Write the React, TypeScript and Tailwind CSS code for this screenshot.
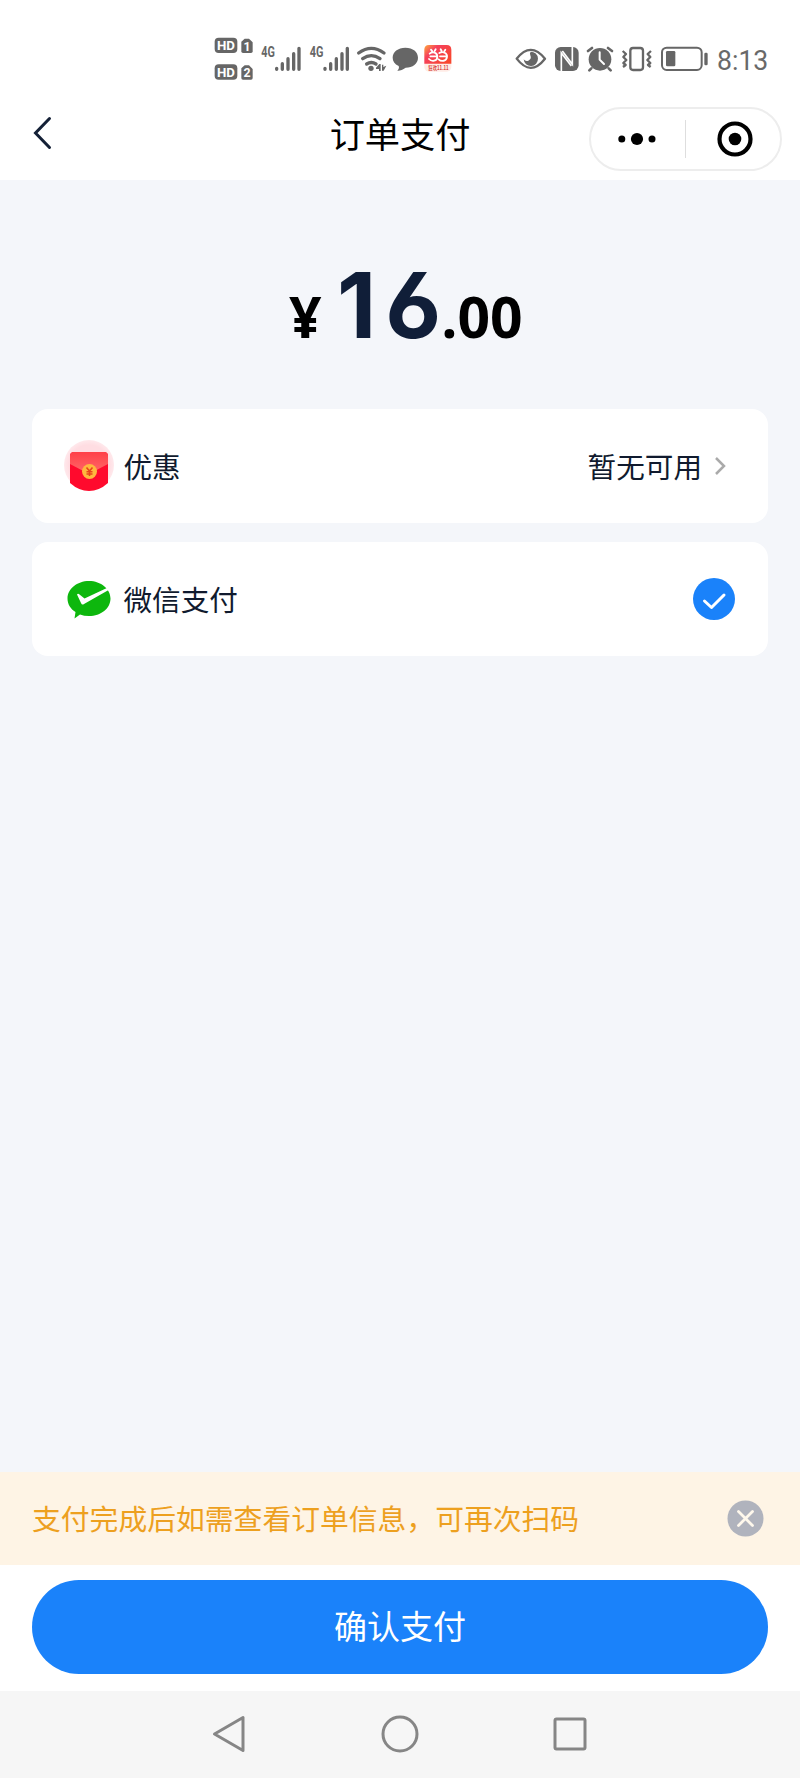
import type { ReactNode } from 'react';

const GRAY = '#666666';

/* Status icons share one 210-unit-high grid drawn at a third of its size. */
function StatusIcon({ x, w, children }: { x: number; w: number; children: ReactNode }) {
  return (
    <svg
      className="block shrink-0"
      width={w / 3}
      height={70}
      viewBox={`${x} 0 ${w} 210`}
      fill={GRAY}
      fontFamily="'Roboto', 'Liberation Sans', sans-serif"
    >
      {children}
    </svg>
  );
}

function SimRow({ y, n }: { y: number; n: string }) {
  return (
    <g>
      <rect x="44" y={y} width="68" height="46" rx="12" />
      <text x="78" y={y + 37} textAnchor="middle" fontSize="41" fontWeight="700" fill="#fff" textLength="54" lengthAdjust="spacingAndGlyphs">HD</text>
      <path d={`M134 ${y + 3}H147L158 ${y + 14}V${y + 41}Q158 ${y + 46} 153 ${y + 46}H129Q124 ${y + 46} 124 ${y + 41}V${y + 12}Z`} />
      <text x="141" y={y + 39} textAnchor="middle" fontSize="37" fontWeight="700" fill="#fff">{n}</text>
    </g>
  );
}

function Signal({ x }: { x: number }) {
  return (
    <g>
      <text x={x} y="97" fontSize="44" fontWeight="700" textLength="41" lengthAdjust="spacingAndGlyphs">4G</text>
      <g stroke={GRAY} strokeWidth="10" strokeLinecap="round">
        <path d={`M${x + 46} 130V133M${x + 63} 116V133M${x + 80} 101V133M${x + 97} 86V133M${x + 113} 70V133`} />
      </g>
    </g>
  );
}

function StatusBar() {
  return (
    <div className="flex h-[95px] items-start pt-[25px]">
      <div className="ml-[200px] flex">
        <StatusIcon x={0} w={180}>
          <SimRow y={38} n="1" />
          <SimRow y={118} n="2" />
        </StatusIcon>
        <StatusIcon x={180} w={144}><Signal x={184} /></StatusIcon>
        <StatusIcon x={324} w={140}><Signal x={329} /></StatusIcon>
        <StatusIcon x={464} w={106}>
          <g fill="none" stroke={GRAY} strokeLinecap="round" strokeWidth="10">
            <path d="M475 84Q513 56 551 84" />
            <path d="M487 101Q513 83 539 101" />
            <path d="M499 117Q513 108 527 117" />
          </g>
          <circle cx="512" cy="130" r="8" />
          <path d="M541 117V138H536V132H527V128L537 117ZM545 119H549V126L558 122L550 137H545Z" />
        </StatusIcon>
        <StatusIcon x={570} w={92}>
          <path d="M616 68C639 68 654 81 654 98C654 116 638 128 617 128C608 134 599 138 592 137C597 132 598 128 596 123C584 117 578 108 578 98C578 81 594 68 616 68Z" />
        </StatusIcon>
        <StatusIcon x={662} w={118}>
          <defs>
            <linearGradient id="promo" x1="0" y1="0" x2="1" y2="0.7">
              <stop offset="0" stopColor="#ffab3d" />
              <stop offset="0.35" stopColor="#f5405c" />
              <stop offset="1" stopColor="#f8472e" />
            </linearGradient>
          </defs>
          <rect x="672" y="60" width="81" height="80" rx="14" fill="#ffece6" />
          <path d="M686 60H739Q753 60 753 74V116H672V74Q672 60 686 60Z" fill="url(#promo)" />
          <g fill="none" stroke="#fff" strokeWidth="5.5" strokeLinecap="round">
            <path d="M688 86C697 78 711 82 711 95C711 109 694 111 686 102M690 94H706M717 84C728 78 741 84 740 95C739 109 723 111 715 103M719 94H736M692 74L696 79M706 73L703 78M721 73L724 78M735 74L732 79" />
          </g>
          <text x="684" y="135" fontSize="17" fontWeight="700" fill="#d9473d" textLength="61" lengthAdjust="spacingAndGlyphs" fontFamily="'Noto Sans CJK SC', sans-serif">狂欢11.11</text>
        </StatusIcon>
      </div>
      <div className="ml-[40px] flex">
        <StatusIcon x={0} w={150}>
          <path d="M50 101Q92 48 135 101Q92 156 50 101Z" fill="none" stroke={GRAY} strokeWidth="7" strokeLinejoin="round" />
          <path d="M92 80A21.500 21.500 0 1 1 71 103Q76 110 85 107Q96 102 91 91Q88 85 92 80Z" />
        </StatusIcon>
        <StatusIcon x={150} w={100}>
          <rect x="165" y="66" width="71" height="72" rx="17" />
          <path d="M184 140V84L214 123M217 64V118L187 78" fill="none" stroke="#fff" strokeWidth="5" />
        </StatusIcon>
        <StatusIcon x={250} w={104}>
          <circle cx="301" cy="103" r="34" />
          <path d="M265 78L277 69M337 78L325 69M275 130L269 136M327 130L333 136" stroke={GRAY} strokeWidth="8" strokeLinecap="round" />
          <path d="M300 82V104L313 117" fill="none" stroke="#fff" strokeWidth="6" strokeLinecap="round" />
        </StatusIcon>
        <StatusIcon x={354} w={116}>
          <g fill="none" stroke={GRAY} strokeWidth="7" strokeLinejoin="round">
            <rect x="391" y="69" width="38" height="66" rx="8" />
            <path d="M368 78L378 87L370 96L379 105L370 114L377 120L369 126M453 78L443 87L451 96L442 105L451 114L444 120L452 126" />
          </g>
        </StatusIcon>
        <StatusIcon x={470} w={175}>
          <rect x="485" y="68" width="119" height="67" rx="14" fill="none" stroke={GRAY} strokeWidth="6" />
          <rect x="497" y="78" width="28" height="46" rx="4" />
          <rect x="612" y="83" width="10" height="38" rx="4" />
        </StatusIcon>
        <StatusIcon x={645} w={175}>
          <text x="651" y="136" fontSize="81" fill="#696969" textLength="154" lengthAdjust="spacingAndGlyphs">8:13</text>
        </StatusIcon>
      </div>
    </div>
  );
}

function Header() {
  return (
    <header className="grid h-[85px] grid-cols-[1fr_auto_1fr] items-start">
      <svg className="ml-[32px] mt-[20px]" width="22" height="36" viewBox="0 0 22 36" fill="none" stroke="#142036" strokeWidth="3" strokeLinecap="round">
        <path d="M17.5 3.5L3.5 18L17.5 32.5" />
      </svg>
      <h1 className="mt-[14px] text-[35.200px] leading-[48px] text-black">订单支付</h1>
      <div className="mr-[18px] mt-[12px] flex h-[64px] w-[193px] items-center justify-self-end rounded-full border-2 border-[#ededed]">
        <svg className="ml-[26px]" width="40" height="14" viewBox="0 0 40 14">
          <circle cx="4.800" cy="7" r="3.500" />
          <circle cx="20" cy="7" r="6.100" />
          <circle cx="35" cy="7" r="3.500" />
        </svg>
        <div className="ml-[28px] h-[38px] w-px bg-[#dedede]" />
        <svg className="ml-[31px]" width="36" height="36" viewBox="0 0 36 36">
          <circle cx="18" cy="18" r="15.500" fill="none" stroke="#000" strokeWidth="4.200" />
          <circle cx="18" cy="18" r="6.300" />
        </svg>
      </div>
    </header>
  );
}

function Envelope() {
  return (
    <svg className="relative top-px" width="50" height="54" viewBox="0 0 50 54">
      <defs>
        <linearGradient id="flap" x1="0" y1="0" x2="0" y2="1">
          <stop offset="0" stopColor="#ff4048" />
          <stop offset="1" stopColor="#ff6a6a" />
        </linearGradient>
        <radialGradient id="halo">
          <stop offset="0.8" stopColor="#ffdde2" />
          <stop offset="1" stopColor="#ffe9ec" />
        </radialGradient>
      </defs>
      <circle cx="25" cy="25" r="25" fill="url(#halo)" />
      <path d="M10 12H40Q44 12 44 16V43Q35 51 25 51T6 43V16Q6 12 10 12Z" fill="#ff0a2d" />
      <path d="M10 12H40Q44 12 44 16V24L25 34L6 24V16Q6 12 10 12Z" fill="url(#flap)" />
      <circle cx="25.5" cy="31.5" r="7.5" fill="#ffb83e" />
      <path d="M22.5 27.5L25.5 31L28.5 27.5M25.5 31V36M22.5 31.7H28.5M22.5 34H28.5" fill="none" stroke="#e9441c" strokeWidth="1.6" />
    </svg>
  );
}

function WeChatPay() {
  return (
    <svg width="50" height="54" viewBox="0 0 50 54">
      <path d="M25 9C37 9 46.500 17 46.500 26.500C46.500 36.500 37 44 25 44Q20 44 16 42.500L10.500 46.500L11.500 40C6.500 37 3.500 32 3.500 26.500C3.500 17 13 9 25 9Z" fill="#0db70d" />
      <path d="M13 22.500Q14 21 15.500 22.500L20.500 26.500L44 15.500L45.500 17.500L20 32Q18 33.500 17 31Z" fill="#fff" />
    </svg>
  );
}

function Row({ icon, label, children }: { icon: ReactNode; label: string; children: ReactNode }) {
  return (
    <div className="flex h-[114px] items-center rounded-[16px] bg-white pl-[32px] text-[28.600px] leading-[40px] text-[#101a2e]">
      {icon}
      <span className="mb-[1px] ml-[9.500px]">{label}</span>
      <div className="ml-auto flex items-center">{children}</div>
    </div>
  );
}

function Amount() {
  return (
    <div className="flex h-[229px] items-baseline pl-[289px] pt-[70px] font-['Open_Sans'] text-[57px] font-bold leading-[110px] text-black">
      <span className="w-[48px]">¥</span>
      <span className="font-['Inter'] text-[91px] text-[#101e38] [font-feature-settings:'cv03']">
        <span className="tracking-[9px]">1</span>6
      </span>
      <span>.00</span>
    </div>
  );
}

export default function App() {
  return (
    <div className="flex h-[1778px] w-[800px] flex-col overflow-hidden bg-white font-['Noto_Sans_CJK_SC',sans-serif]">
      <StatusBar />
      <Header />
      <main className="flex-1 bg-[#f4f6fa]">
        <Amount />
        <div className="flex flex-col gap-[19px] px-[32px]">
          <Row icon={<Envelope />} label="优惠">
            <span className="mb-[1px]">暂无可用</span>
            <svg className="ml-[11px] mr-[41px]" width="14" height="20" viewBox="0 0 14 20" fill="none" stroke="#aaa" strokeWidth="2.500">
              <path d="M3 2L11 10L3 18" />
            </svg>
          </Row>
          <Row icon={<WeChatPay />} label="微信支付">
            <svg className="mr-[33px]" width="42" height="42" viewBox="0 0 42 42" fill="none">
              <circle cx="21" cy="21" r="21" fill="#1a82fa" />
              <path d="M11.500 23L18.500 29.500L31 17" stroke="#fff" strokeWidth="3" strokeLinecap="round" strokeLinejoin="round" />
            </svg>
          </Row>
        </div>
      </main>
      <div className="flex h-[93px] shrink-0 items-center justify-between bg-[#fef4e5] pl-[32px] pr-[36px] text-[28.800px] text-[#eda01f]">
        <span className="mb-[2px]">支付完成后如需查看订单信息，可再次扫码</span>
        <svg width="37" height="37" viewBox="0 0 37 37">
          <circle cx="18.500" cy="18.500" r="18" fill="#b0b3bd" />
          <path d="M11.500 11.500L25.500 25.500M25.500 11.500L11.500 25.500" stroke="#fef8ec" strokeWidth="2.800" strokeLinecap="round" />
        </svg>
      </div>
      <div className="h-[126px] shrink-0 px-[32px] pt-[15px]">
        <button className="flex h-[94px] w-full items-center justify-center rounded-full bg-[#1a82fa] pb-[3px] text-[33px] leading-none text-white">确认支付</button>
      </div>
      <nav className="flex h-[87px] shrink-0 items-center justify-center gap-[130px] bg-[#f6f6f6] pb-[1px] text-[#868686]">
        <svg width="40" height="40" viewBox="0 0 40 40" fill="none" stroke="currentColor" strokeWidth="3" strokeLinejoin="round">
          <path d="M4.500 20L33 3.500V36.500Z" />
        </svg>
        <svg width="40" height="40" viewBox="0 0 40 40" fill="none" stroke="currentColor" strokeWidth="3">
          <circle cx="20" cy="20" r="17" />
        </svg>
        <svg width="40" height="40" viewBox="0 0 40 40" fill="none" stroke="currentColor" strokeWidth="3">
          <rect x="5" y="5" width="30" height="30" rx="1.500" />
        </svg>
      </nav>
    </div>
  );
}
